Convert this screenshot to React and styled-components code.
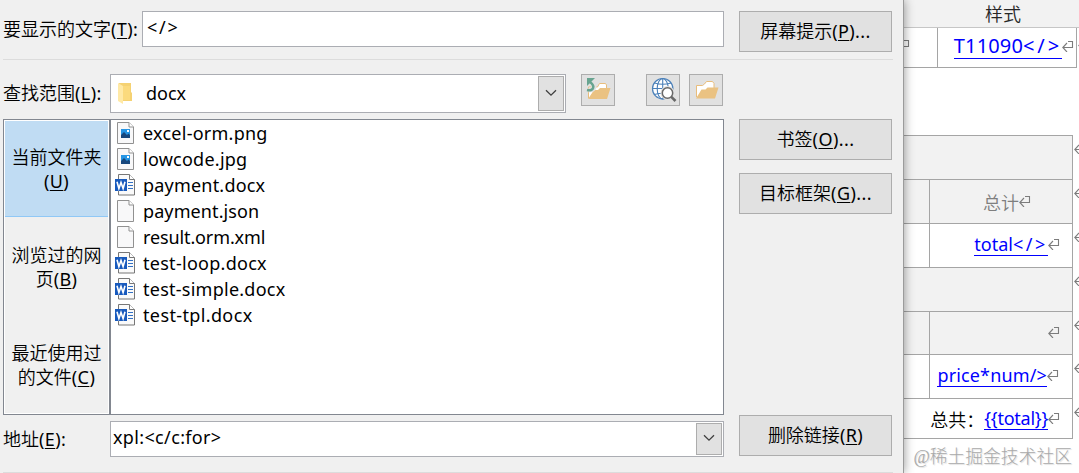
import React from 'react'
import styled, { createGlobalStyle } from 'styled-components'

const GlobalStyle = createGlobalStyle`
    * {
        box-sizing: border-box;
    }

    body {
        margin: 0;
        overflow: hidden;
        background: #fff;
        font-family: "Noto Sans", "Noto Sans CJK SC", sans-serif;
        color: #000;
    }

    svg {
        flex: none;
    }
`;

const Page = styled.div`
    display: flex;
    width: 1079px;
    height: 473px;
    overflow: hidden;
`;

const Dialog = styled.div`
    position: relative;
    z-index: 1;
    flex: none;
    display: flex;
    flex-direction: column;
    width: 903px;
    height: 473px;
    padding: 11px 10px 0 3px;
    background: #f0f0f0;
    box-shadow: 1px 0 0 #9b9b9b, 1px 0 10px rgba(0, 0, 0, 0.42);
`;

const TopRow = styled.div`
    display: flex;
    height: 48px;
`;

const Divider = styled.div`
    flex: none;
    height: 1px;
    background: #dcdcdc;
`;

const Columns = styled.div`
    display: flex;
    gap: 15px;
    height: 412px;
    padding-top: 14px;
`;

const MainColumn = styled.div`
    width: 721px;
`;

const SideColumn = styled.div`
    display: flex;
    flex-direction: column;
    gap: 13px;
    padding-top: 45px;
`;

const Line = styled.div`
    display: flex;
    height: ${({ $height }) => $height}px;
    padding-top: ${({ $top }) => $top || 0}px;
`;

const Label = styled.label`
    flex: none;
    width: ${({ $width }) => $width}px;
    padding-top: ${({ $top }) => $top}px;
    font-family: "Noto Sans CJK SC", sans-serif;
    font-weight: 350;
    font-size: 18px;
    line-height: 24px;
    white-space: nowrap;
`;

// "(T)" style accelerator after a Chinese caption
const Keys = styled.span`
    font-family: "Noto Sans", sans-serif;
    font-weight: 380;
    font-size: 18px;
    line-height: 1;
    letter-spacing: 0.4px;
`;

const Key = styled.span`
    text-decoration: underline;
    text-decoration-thickness: 1px;
    text-underline-offset: 2px;
`;

const Field = styled.div`
    display: flex;
    width: ${({ $width }) => $width}px;
    height: ${({ $height }) => $height || 36}px;
    padding: 1px;
    border: 1px solid #abadb3;
    background: #fff;
    font-size: 18px;
    line-height: 24px;
`;

const FieldIcon = styled.div`
    width: 34px;
    padding: 6px 0 0 6px;
`;

const FieldText = styled.div`
    flex: 1;
    padding: ${({ $pad }) => $pad};
    letter-spacing: ${({ $track }) => $track || 0}px;
    white-space: nowrap;
`;

const Button = styled.button`
    flex: none;
    width: 153px;
    height: 41px;
    margin: ${({ $margin }) => $margin || 0};
    padding: 0 0 3px;
    border: 1px solid #adadad;
    background: #e1e1e1;
    color: #000;
    font-family: "Noto Sans CJK SC", sans-serif;
    font-weight: 350;
    font-size: 18px;
    line-height: 24px;
`;

const IconButton = styled.button`
    display: flex;
    width: 34px;
    height: 32px;
    margin-left: ${({ $gap }) => $gap}px;
    padding: 0;
    border: 1px solid #adadad;
    background: #e1e1e1;
`;

const Arrow = styled.div`
    display: flex;
    align-items: center;
    justify-content: center;
    width: 26px;
    padding-bottom: 2px;
    border: 1px solid #adadad;
    background: #e1e1e1;
`;

const Browser = styled.div`
    display: flex;
    height: 296px;
    border: 1px solid #828790;
    background: #fff;
`;

const Places = styled.div`
    width: 107px;
    padding: 1px;
    border-right: 2px solid #828790;
`;

const Place = styled.div`
    display: flex;
    flex-direction: column;
    align-items: center;
    height: 98px;
    padding-top: 23px;
    background: ${({ $active }) => ($active ? '#c0dcf3' : '#f0f0f0')};
    box-shadow: ${({ $active }) => ($active ? 'inset 0 -2px #f0f0f0, inset 0 -3px #90c8f6' : 'none')};
    font-family: "Noto Sans CJK SC", sans-serif;
    font-weight: 350;
    font-size: 18px;
    line-height: 24px;

    &:last-child {
        height: 96px;
    }
`;

const PlaceLine = styled.div`
    height: 24px;
    white-space: nowrap;
`;

const Files = styled.div`
    padding: 0 0 0 4px;
`;

const File = styled.div`
    display: flex;
    align-items: center;
    gap: 7px;
    height: 26px;
    font-size: 18px;
    line-height: 24px;
    letter-spacing: ${({ $track }) => $track}px;
    white-space: nowrap;
`;

const Document = styled.div`
    position: relative;
    flex: 1;
    overflow: hidden;
`;

const DocHead = styled.div`
    height: 28px;
    padding-left: 82px;
    border-bottom: 1px solid #c6c6c6;
    background: #f2f2f2;
    color: #262626;
    font-size: 18px;
    line-height: 26px;
    font-family: "Noto Sans CJK SC", sans-serif;
    font-weight: 350;
`;

const Table = styled.div`
    width: ${({ $width }) => $width}px;
    margin-top: ${({ $top }) => $top || 0}px;
    border-top: ${({ $top }) => ($top ? '1px solid #a5a5a5' : 'none')};
`;

const Row = styled.div`
    position: relative;
    display: flex;
    height: ${({ $height }) => $height}px;
    border-right: 1px solid #a5a5a5;
    border-bottom: 1px solid #a5a5a5;
    background: ${({ $shade }) => ($shade ? '#f2f2f2' : '#fff')};
`;

const Gutter = styled.div`
    width: ${({ $width }) => $width}px;
    border-right: 1px solid #a5a5a5;

    svg {
        display: block;
        margin: 11px 0 0 -5px;
    }
`;

const Cell = styled.div`
    flex: 1;
    display: flex;
    align-items: center;
    justify-content: flex-end;
    padding-right: ${({ $right }) => $right}px;
    padding-bottom: ${({ $bottom }) => $bottom || 0}px;
    color: ${({ $muted }) => ($muted ? '#7f7f7f' : '#000')};
    font-size: 18px;
    font-weight: 350;
    white-space: nowrap;

    svg {
        margin-bottom: 2px;
    }
`;

const DocLink = styled.a`
    height: ${({ $height }) => $height || 22}px;
    border-bottom: 1px solid #0000ff;
    color: #0000ff;
    font-size: ${({ $size }) => $size || 18}px;
    font-weight: 400;
    line-height: 20px;
    letter-spacing: ${({ $track }) => $track || 0}px;
`;

const Wide = styled.span`
    letter-spacing: 0.144em;
`;

// end-of-row mark hanging past the table edge
const RowMark = styled.div`
    position: absolute;
    top: ${({ $top }) => $top || 6}px;
    left: 100%;
    display: flex;
    margin-left: 2px;
`;

const Watermark = styled.div`
    position: absolute;
    right: 7px;
    bottom: 3px;
    color: #a9a9a9;
    font-family: "Liberation Serif", "Noto Sans CJK SC", serif;
    font-weight: 200;
    font-size: 17.8px;
    line-height: 26px;
    text-shadow: 1px 1px 1px #ddd;
    white-space: nowrap;
`;

const Return = () => (
    <svg width="12" height="12" viewBox="0 0 12 12" fill="none" stroke="#7c7c7c" strokeWidth="1.1">
        <path d="M6 1.5h4.500v6H1M5 3L.8 7.500 5 12" />
    </svg>
)

const Chevron = () => (
    <svg width="12" height="8" viewBox="0 0 12 8" fill="none" stroke="#404040" strokeWidth="1.3">
        <path d="M1 1.2l5 5 5-5" />
    </svg>
)

const FolderIcon = () => (
    <svg width="14" height="22" viewBox="0 0 14 22">
        <path d="M1 1h12v9l1 1v8H4z" fill="#f5d273" />
        <path d="M4 4h8v14H4z" fill="#fbda7d" />
        <path d="M0 1l5 3v18l-5-3z" fill="#ffe9a6" />
    </svg>
)

const FolderOpenIcon = () => (
    <svg width="32" height="30" viewBox="0 0 32 30">
        <path d="M6.500 22V10.500h6L14.500 9l2-2.500h6l1.500 2v6" fill="#fff" stroke="#e8bd7c" strokeWidth="1" />
        <path d="M6 23.500l5.500-9h4l2-2H28.500l-3.500 11z" fill="#eac282" />
    </svg>
)

const UpFolderIcon = () => (
    <svg width="32" height="30" viewBox="0 0 32 30">
        <path d="M6.500 23V12h9l2-3.500h6l1 1.500v6" fill="#fff" stroke="#e8bd7c" strokeWidth="1" />
        <path d="M6 24l6-9h4l2-2h10.500l-3.500 11z" fill="#eac282" />
        <path d="M6.500 15c5 0 6-2 5-5L8 6" fill="none" stroke="#e1e1e1" strokeWidth="5" />
        <path d="M5 15c6 1.500 9-3.500 3-8" fill="none" stroke="#68a490" strokeWidth="2.500" />
        <path d="M5 3h8L5 11z" fill="#68a490" />
    </svg>
)

const GlobeIcon = () => (
    <svg width="32" height="30" viewBox="0 0 32 30" fill="none">
        <circle cx="15.700" cy="13.700" r="10.200" fill="#fff" stroke="#4b80b9" strokeWidth="1.200" />
        <path d="M15.700 3.500v20.500M5.500 13.500h20.500M7.500 8q8.200 2.500 16.500 0M7.500 19.500q8.200-2.500 16.500 0" stroke="#4b80b9" strokeWidth="1.100" />
        <ellipse cx="15.700" cy="13.700" rx="5.500" ry="10.200" stroke="#4b80b9" strokeWidth="1.100" />
        <path d="M24 22l4.500 4.500" stroke="#e1e1e1" strokeWidth="4.500" />
        <circle cx="20.500" cy="18" r="7" fill="#e1e1e1" />
        <circle cx="20.500" cy="18" r="5.200" fill="#fff" stroke="#686868" strokeWidth="1.500" />
        <path d="M24.300 21.800l4.200 4.200" stroke="#686868" strokeWidth="2.600" />
    </svg>
)

const FileIcon = ({ type }) => (
    <svg width="21" height="24" viewBox="0 0 21 24">
        {type !== 'word' && (
            <>
                <path d="M2.500 1.500h11.500l4.500 4.500v16.500h-16z" fill="#f8f8f9" stroke="#919191" />
                <path d="M14 1.500v4.500h4.500" fill="#fff" stroke="#919191" />
            </>
        )}
        {type === 'image' && (
            <>
                <path d="M6 8h9v9H6z" fill="#2695e4" />
                <path d="M6 14l3-3 3 3 1.500-1.500L15 14v3H6z" fill="#17477d" />
                <path d="M12 9h2v2h-2z" fill="#fff" />
            </>
        )}
        {type === 'word' && (
            <>
                <path d="M3.500 1.500h11l5 5v15.500h-16z" fill="#fafafa" stroke="#777" />
                <path d="M14.500 1.500v5h5" fill="#fff" stroke="#777" />
                <path d="M13 9.500h5M13 12.500h5M13 15.500h5" stroke="#3270c4" />
                <path d="M0 6h12v12H0z" fill="#185abd" />
                <path d="M2 8.800l1.900 6.700L6 9.500l2.100 6L10 8.800" fill="none" stroke="#fff" strokeWidth="1.600" />
            </>
        )}
    </svg>
)

const files = [
    { name: 'excel-orm.png', type: 'image', track: 0.25 },
    { name: 'lowcode.jpg', type: 'image', track: 0.25 },
    { name: 'payment.docx', type: 'word', track: 0.2 },
    { name: 'payment.json', type: 'blank', track: 0.1 },
    { name: 'result.orm.xml', type: 'blank', track: -0.12 },
    { name: 'test-loop.docx', type: 'word', track: 0.28 },
    { name: 'test-simple.docx', type: 'word', track: 0.25 },
    { name: 'test-tpl.docx', type: 'word', track: 0.37 },
]

const places = [
    { lines: ['当前文件夹', ''], letter: 'U' },
    { lines: ['浏览过的网', '页'], letter: 'B' },
    { lines: ['最近使用过', '的文件'], letter: 'C' },
]

const Accel = ({ letter, after }) => (
    <Keys>(<Key>{letter}</Key>){after}</Keys>
)

const LinkDialog = () => {
    return (
        <Dialog>
            <TopRow>
                <Label $width={139} $top={5}>要显示的文字<Accel letter="T" after=":" /></Label>
                <Field $width={582}>
                    <FieldText $pad="2px 3px" $track={1.8}>&lt;/&gt;</FieldText>
                </Field>
                <Button $margin="0 0 0 15px">屏幕提示<Accel letter="P" after="..." /></Button>
            </TopRow>
            <Divider />
            <Columns>
                <MainColumn>
                    <Line $height={45}>
                        <Label $width={107} $top={6}>查找范围<Accel letter="L" after=":" /></Label>
                        <Field $width={456} $height={39}>
                            <FieldIcon><FolderIcon /></FieldIcon>
                            <FieldText $pad="5px 0 0 0">docx</FieldText>
                            <Arrow><Chevron /></Arrow>
                        </Field>
                        <IconButton $gap={15}><UpFolderIcon /></IconButton>
                        <IconButton $gap={31}><GlobeIcon /></IconButton>
                        <IconButton $gap={9}><FolderOpenIcon /></IconButton>
                    </Line>
                    <Browser>
                        <Places>
                            {places.map((place, i) => (
                                <Place key={place.letter} $active={i === 0}>
                                    <PlaceLine>{place.lines[0]}</PlaceLine>
                                    <PlaceLine>{place.lines[1]}<Accel letter={place.letter} /></PlaceLine>
                                </Place>
                            ))}
                        </Places>
                        <Files>
                            {files.map((file) => (
                                <File key={file.name} $track={file.track}>
                                    <FileIcon type={file.type} />
                                    {file.name}
                                </File>
                            ))}
                        </Files>
                    </Browser>
                    <Line $height={42} $top={6}>
                        <Label $width={107} $top={5}>地址<Accel letter="E" after=":" /></Label>
                        <Field $width={614}>
                            <FieldText $pad="2px 1px" $track={0.35}>xpl:&lt;c/c:for&gt;</FieldText>
                            <Arrow><Chevron /></Arrow>
                        </Field>
                    </Line>
                </MainColumn>
                <SideColumn>
                    <Button>书签<Accel letter="O" after="..." /></Button>
                    <Button>目标框架<Accel letter="G" after="..." /></Button>
                    <Button $margin="188px 0 0">删除链接<Accel letter="R" /></Button>
                </SideColumn>
            </Columns>
            <Divider />
        </Dialog>
    )
}

const App = () => {
    return (
        <Page>
            <GlobalStyle />
            <LinkDialog />
            <Document>
                <DocHead>样式</DocHead>
                <Table $width={174}>
                    <Row $height={40}>
                        <Gutter $width={35}><Return /></Gutter>
                        <Cell $right={2} $bottom={1}>
                            <DocLink $size={20} $height={23} $track={0.15}>T11090<Wide>&lt;/&gt;</Wide></DocLink><Return />
                        </Cell>
                        <RowMark $top={10}><Return /></RowMark>
                    </Row>
                </Table>
                <Table $width={170} $top={67}>
                    <Row $height={44} $shade><RowMark><Return /></RowMark></Row>
                    <Row $height={44} $shade>
                        <Gutter $width={27} />
                        <Cell $right={41} $muted>总计<Return /></Cell>
                        <RowMark><Return /></RowMark>
                    </Row>
                    <Row $height={44}>
                        <Gutter $width={27} />
                        <Cell $right={12} $bottom={1}><DocLink>total<Wide>&lt;/&gt;</Wide></DocLink><Return /></Cell>
                        <RowMark><Return /></RowMark>
                    </Row>
                    <Row $height={44} $shade><RowMark><Return /></RowMark></Row>
                    <Row $height={43} $shade>
                        <Gutter $width={27} />
                        <Cell $right={12}><Return /></Cell>
                        <RowMark><Return /></RowMark>
                    </Row>
                    <Row $height={44}>
                        <Gutter $width={27} />
                        <Cell $right={13} $bottom={2}><DocLink $track={0.15}>price*num/&gt;</DocLink><Return /></Cell>
                        <RowMark><Return /></RowMark>
                    </Row>
                    <Row $height={40}>
                        <Cell $right={12}>总共：<DocLink $track={-0.25}>{'{{total}}'}</DocLink><Return /></Cell>
                        <RowMark><Return /></RowMark>
                    </Row>
                </Table>
                <Watermark>@稀土掘金技术社区</Watermark>
            </Document>
        </Page>
    )
}

export default App
